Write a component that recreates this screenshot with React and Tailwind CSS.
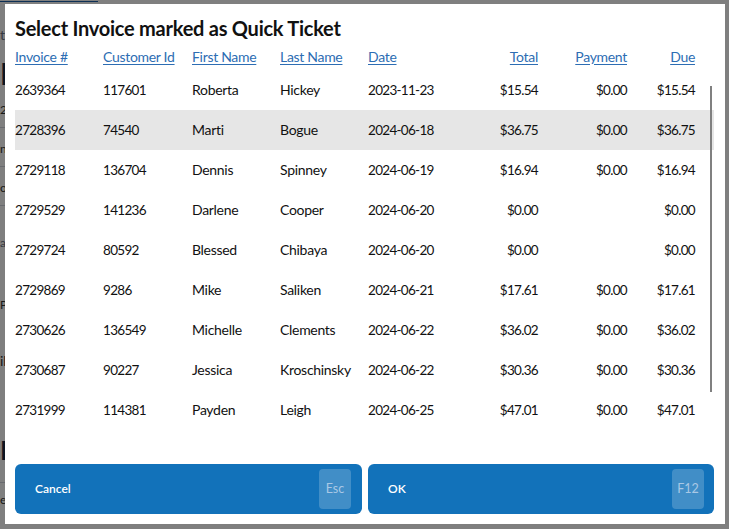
import React from 'react';

const rows = [
  ['2639364', '117601', 'Roberta', 'Hickey', '2023-11-23', '$15.54', '$0.00', '$15.54'],
  ['2728396', '74540', 'Marti', 'Bogue', '2024-06-18', '$36.75', '$0.00', '$36.75'],
  ['2729118', '136704', 'Dennis', 'Spinney', '2024-06-19', '$16.94', '$0.00', '$16.94'],
  ['2729529', '141236', 'Darlene', 'Cooper', '2024-06-20', '$0.00', '', '$0.00'],
  ['2729724', '80592', 'Blessed', 'Chibaya', '2024-06-20', '$0.00', '', '$0.00'],
  ['2729869', '9286', 'Mike', 'Saliken', '2024-06-21', '$17.61', '$0.00', '$17.61'],
  ['2730626', '136549', 'Michelle', 'Clements', '2024-06-22', '$36.02', '$0.00', '$36.02'],
  ['2730687', '90227', 'Jessica', 'Kroschinsky', '2024-06-22', '$30.36', '$0.00', '$30.36'],
  ['2731999', '114381', 'Payden', 'Leigh', '2024-06-25', '$47.01', '$0.00', '$47.01'],
];

// numeric columns get tighter digits
const cols = [
  { label: 'Invoice #', cls: 'w-[88px]', num: true },
  { label: 'Customer Id', cls: 'w-[89px]', num: true },
  { label: 'First Name', cls: 'w-[88px]' },
  { label: 'Last Name', cls: 'w-[88px]' },
  { label: 'Date', cls: 'w-[90px]', num: true },
  { label: 'Total', cls: 'w-[80px] text-right', num: true },
  { label: 'Payment', cls: 'w-[89px] text-right', num: true },
  { label: 'Due', cls: 'w-[68px] text-right', num: true },
];

function Backdrop() {
  return (
    <div className="flex w-[12px] flex-col gap-3 overflow-hidden pt-[14px] text-[#333]">
      <div className="mt-[10px] text-[14px] text-gray-500">t</div>
      <div className="text-[30px] font-bold leading-8 text-[#1b2a44]">I</div>
      <div className="border-b border-gray-300 pb-2 text-[12px]">2</div>
      <div className="border-b border-gray-300 pb-2 text-[12px]">n</div>
      <div className="border-b border-gray-300 pb-2 text-[12px]">o</div>
      <div className="mt-4 text-[12px] text-gray-500">a</div>
      <div className="mt-8 text-[12px]">P</div>
      <div className="mt-6 text-[14px]">il</div>
      <div className="mt-12 text-[26px] font-bold text-[#1b2a44]">I</div>
      <div className="border-t border-gray-300 pt-2 text-[12px]">e</div>
    </div>
  );
}

export default function App() {
  return (
    <div className="relative h-[529px] w-[729px] overflow-hidden bg-white font-['Lato',sans-serif]">
      <Backdrop />
      <div className="absolute left-0 top-[1px] h-[1px] w-[98px] bg-[#1d5fa8]" />
      <div className="absolute inset-0 bg-black/50" />

      <div className="absolute left-[5px] top-[4px] flex h-[520px] w-[720px] flex-col bg-white pl-[10px] pr-[11px] pb-[10px] pt-[8px]">
        <h1 className="h-[32px] text-[20px] font-bold leading-[32px] tracking-[-0.25px] text-[#111]">
          Select Invoice marked as Quick Ticket
        </h1>

        <div className="flex h-[24px] items-center text-[14px] tracking-[-0.3px]">
          {cols.map((c) => (
            <div key={c.label} className={c.cls}>
              <a className="cursor-pointer text-[#2d6db3] underline underline-offset-2">{c.label}</a>
            </div>
          ))}
        </div>

        <div className="relative mt-[2px] h-[360px]">
          {rows.map((r, i) => (
            <div
              key={r[0]}
              className={`flex h-[40px] items-baseline text-[#111] ${i === 1 ? 'bg-[#e6e6e6]' : ''}`}
            >
              {r.map((v, j) => (
                <div
                  key={j}
                  className={`${cols[j].cls} leading-[40px] ${cols[j].num ? 'text-[13.5px] tracking-[-0.7px]' : 'text-[14px] tracking-[-0.3px]'}`}
                >
                  {v}
                </div>
              ))}
            </div>
          ))}
          <div className="absolute right-[2px] top-[16px] h-[306px] w-[2px] bg-[#808080]" />
        </div>

        <div className="mt-auto flex h-[50px] gap-[6px]">
          <button
            type="button"
            className="flex flex-1 items-center justify-between rounded-[6px] bg-[#1272ba] pl-[20px] pr-[11px] text-[12px] font-semibold text-white"
          >
            <span>Cancel</span>
            <span className="flex h-[40px] w-[32px] items-center justify-center rounded-[4px] bg-white/20 text-[12.5px] font-normal text-[#a9c8e5]">Esc</span>
          </button>
          <button
            type="button"
            className="flex flex-1 items-center justify-between rounded-[6px] bg-[#1272ba] pl-[20px] pr-[10px] text-[12px] font-semibold text-white"
          >
            <span>OK</span>
            <span className="flex h-[40px] w-[32px] items-center justify-center rounded-[4px] bg-white/20 text-[12.5px] font-normal text-[#a9c8e5]">F12</span>
          </button>
        </div>
      </div>
    </div>
  );
}
